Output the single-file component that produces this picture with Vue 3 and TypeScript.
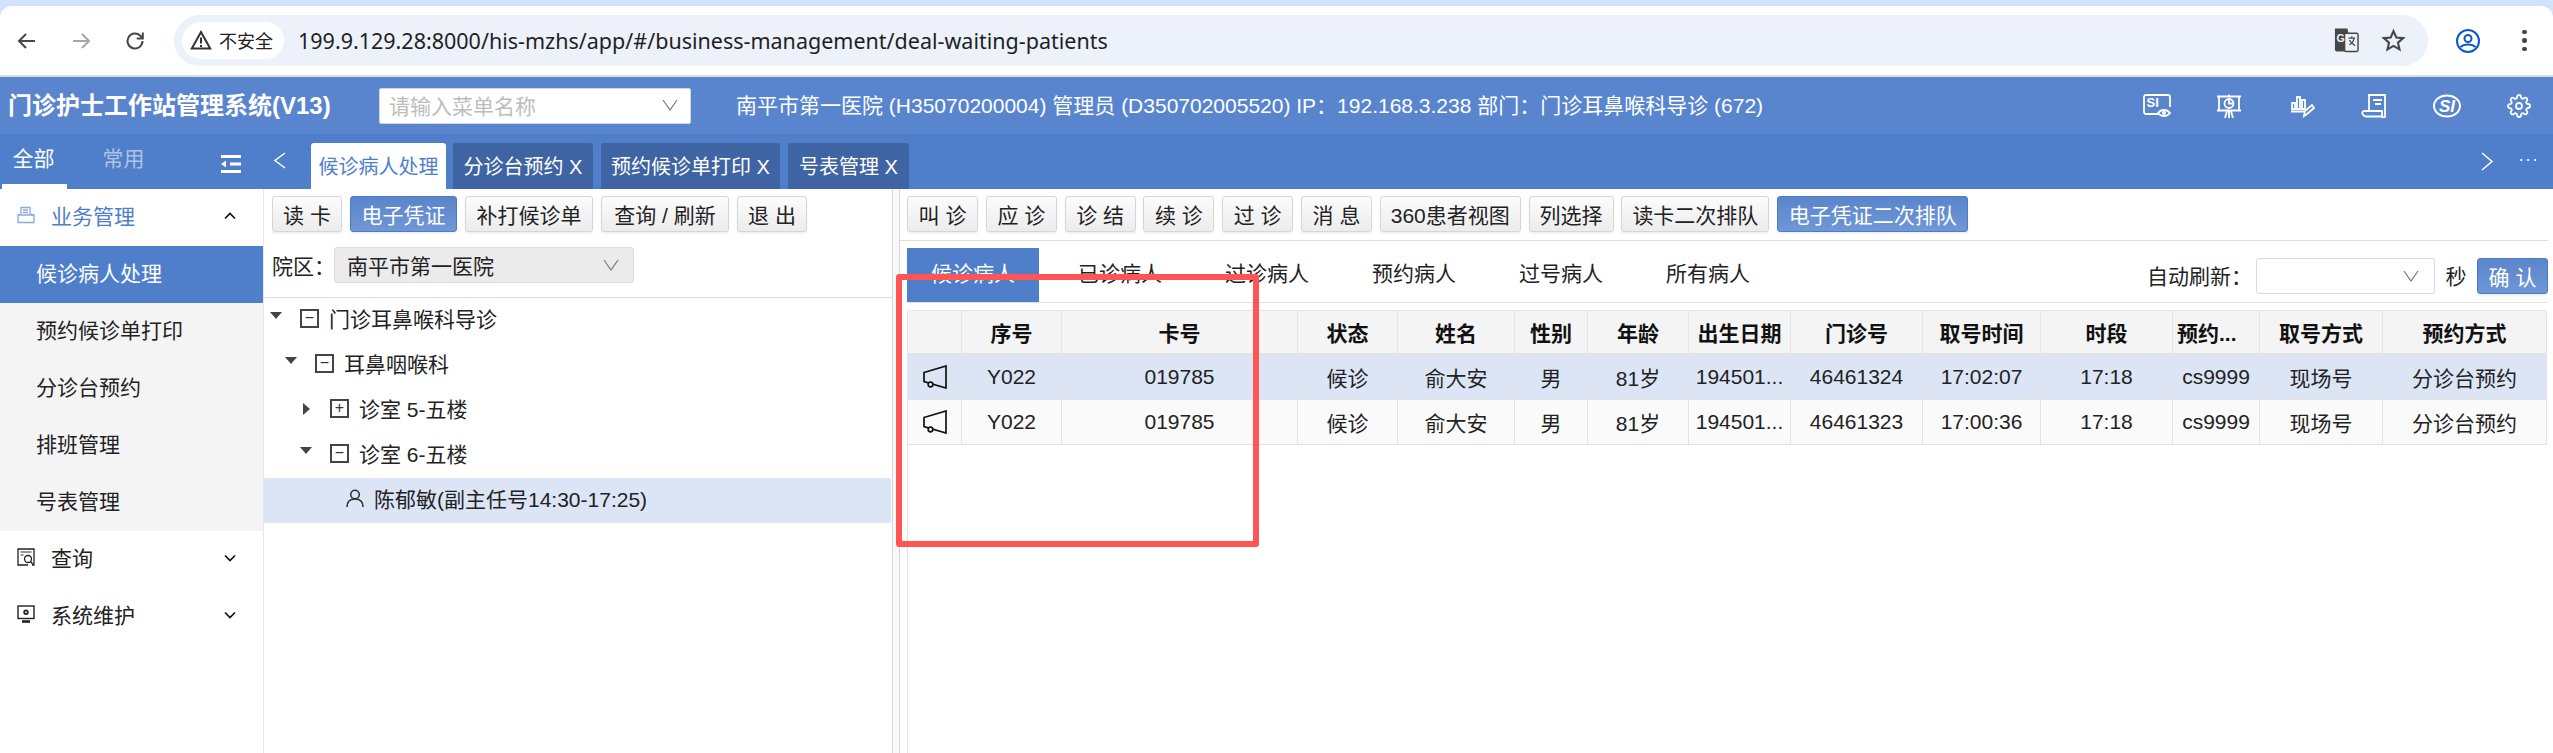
<script setup lang="ts">
const leftButtons = [
  { label: '读 卡', w: 70 },
  { label: '电子凭证', w: 107, primary: true },
  { label: '补打候诊单', w: 128 },
  { label: '查询 / 刷新', w: 128 },
  { label: '退 出', w: 70 },
]
const rightButtons = [
  { label: '叫 诊', w: 71 },
  { label: '应 诊', w: 71 },
  { label: '诊 结', w: 71 },
  { label: '续 诊', w: 71 },
  { label: '过 诊', w: 71 },
  { label: '消 息', w: 71 },
  { label: '360患者视图', w: 141 },
  { label: '列选择', w: 85 },
  { label: '读卡二次排队', w: 148 },
  { label: '电子凭证二次排队', w: 191, primary: true },
]
const subMenu = ['候诊病人处理', '预约候诊单打印', '分诊台预约', '排班管理', '号表管理']
const tree = [
  { label: '门诊耳鼻喉科导诊', level: 0, state: 'open' },
  { label: '耳鼻咽喉科', level: 1, state: 'open' },
  { label: '诊室 5-五楼', level: 2, state: 'closed' },
  { label: '诊室 6-五楼', level: 2, state: 'open' },
  { label: '陈郁敏(副主任号14:30-17:25)', level: 3, state: 'leaf' },
]
const patientTabs = ['候诊病人', '已诊病人', '过诊病人', '预约病人', '过号病人', '所有病人']
const headers = ['', '序号', '卡号', '状态', '姓名', '性别', '年龄', '出生日期', '门诊号', '取号时间', '时段', '预约...', '取号方式', '预约方式']
const rows = [
  ['Y022', '019785', '候诊', '俞大安', '男', '81岁', '194501...', '46461324', '17:02:07', '17:18', 'cs9999', '现场号', '分诊台预约'],
  ['Y022', '019785', '候诊', '俞大安', '男', '81岁', '194501...', '46461323', '17:00:36', '17:18', 'cs9999', '现场号', '分诊台预约'],
]
</script>

<template>
  <div class="page">
    <div class="browser">
      <div class="strip"></div>
      <div class="toolbar">
        <svg class="nav" viewBox="0 0 24 24" fill="none" stroke="#474747" stroke-width="2"><path d="M20 12H4.500M11 5l-7 7 7 7" /></svg>
        <svg class="nav" viewBox="0 0 24 24" fill="none" stroke="#a8a8a8" stroke-width="2"><path d="M4 12h15.500M13 5l7 7-7 7" /></svg>
        <svg class="nav" viewBox="0 0 24 24" fill="none" stroke="#474747" stroke-width="2"><path d="M19.500 12a7.500 7.500 0 1 1-2.400-5.500L19.500 9" /><path d="M19.800 3.500V9.500H13.800" /></svg>
        <div class="omnibox">
          <div class="chip">
            <svg class="warn" viewBox="0 0 22 20" fill="none" stroke="#333" stroke-width="2"><path d="M11 2L1.800 18.500h18.400z" /><path d="M11 7.500v6M11 15v2" /></svg>
            <span>不安全</span>
          </div>
          <span class="url">199.9.129.28:8000/his-mzhs/app/#/business-management/deal-waiting-patients</span>
          <svg class="translate" viewBox="0 0 26 26">
            <path d="M1 1h13l5 24H3a2 2 0 0 1-2-2z" fill="#474747" />
            <rect x="11" y="6" width="14" height="19" rx="1.500" fill="#ecf1fa" stroke="#474747" stroke-width="1.500" />
            <text x="2.500" y="15" class="g-letter">G</text>
            <path d="M15 11h7M18.500 9v2M21 11c-1 4-3 6-5 7M16 13c1 2 3 4 6 6" fill="none" stroke="#474747" stroke-width="1.300" />
          </svg>
          <svg class="star" viewBox="0 0 24 24" fill="none" stroke="#474747" stroke-width="2"><path d="M12 3l2.700 6.100 6.600.6-5 4.400 1.500 6.500L12 17.200l-5.800 3.400 1.500-6.500-5-4.400 6.600-.6z" /></svg>
        </div>
        <svg class="profile" viewBox="0 0 24 24" fill="none" stroke="#0b57d0" stroke-width="2"><circle cx="12" cy="12" r="11" /><circle cx="12" cy="9.500" r="3.500" /><path d="M4.500 18c2-2 4.500-2.600 7.500-2.600s5.500.6 7.500 2.600" /></svg>
        <div class="dots"><i></i><i></i><i></i></div>
      </div>
    </div>

    <header class="app-header">
      <h1 class="title">门诊护士工作站管理系统(V13)</h1>
      <div class="menu-search">
        <span>请输入菜单名称</span>
        <svg class="chev" viewBox="0 0 16 12" fill="none" stroke="#777" stroke-width="1.200"><path d="M1 1l7 10 7-10" /></svg>
      </div>
      <div class="info">南平市第一医院 (H35070200004) 管理员 (D350702005520) IP：192.168.3.238 部门：门诊耳鼻喉科导诊 (672)</div>
      <div class="head-icons">
        <svg viewBox="0 0 28 24" fill="none" stroke="#fff" stroke-width="1.800"><path d="M19 20H3a2 2 0 0 1-2-2V3a2 2 0 0 1 2-2h22a2 2 0 0 1 2 2v10" /><text x="3.500" y="13" class="si-mini">SI</text><path d="M15 19c3-4 9-4 12 0-3 4-9 4-12 0z" fill="#5985cf" /><circle cx="21" cy="19" r="2" fill="#fff" stroke="none" /></svg>
        <svg viewBox="0 0 24 24" fill="none" stroke="#fff" stroke-width="1.800"><path d="M0 2.500h24M2 2.500v14M22 2.500v14M0 16.500h24M12 .5v2M10 17l-2 7M14 17l2 7M12 17v7" /><circle cx="12" cy="9.500" r="4.500" /><path d="M12 5v4.500h4.500" /></svg>
        <svg viewBox="0 0 24 24" fill="none" stroke="#fff" stroke-width="1.800"><path d="M2 9v6h3V9zM7 3v12h3V3zM12 6v9h3V6zM1 17.500h13" /><path d="M14 22l1-5 7-6 2 3-7 6z" /></svg>
        <svg viewBox="0 0 24 24" fill="none" stroke="#fff" stroke-width="1.800"><path d="M7 16V1h16v21.500a1.500 1.500 0 0 1-3 0V17H2a2 2 0 0 0-1 3.500c.5 1 1.500 2 3 2h17.500" /><path d="M11 6h9M13 10h6" /></svg>
        <svg viewBox="0 0 28 24" fill="none" stroke="#fff" stroke-width="2"><ellipse cx="14" cy="12" rx="13" ry="10.500" /><text x="6" y="18" class="si-big">SI</text></svg>
        <svg viewBox="0 0 24 24" fill="none" stroke="#fff" stroke-width="1.800"><path d="M12 15a3 3 0 1 0 0-6 3 3 0 0 0 0 6z" /><path d="M19.400 15a1.650 1.650 0 0 0 .33 1.820l.06.06a2 2 0 0 1 0 2.830 2 2 0 0 1-2.830 0l-.06-.06a1.650 1.650 0 0 0-1.820-.33 1.650 1.650 0 0 0-1 1.510V21a2 2 0 0 1-2 2 2 2 0 0 1-2-2v-.09A1.650 1.650 0 0 0 9 19.400a1.650 1.650 0 0 0-1.820.33l-.06.06a2 2 0 0 1-2.830 0 2 2 0 0 1 0-2.830l.06-.06a1.650 1.650 0 0 0 .33-1.820 1.650 1.650 0 0 0-1.510-1H3a2 2 0 0 1-2-2 2 2 0 0 1 2-2h.09A1.650 1.650 0 0 0 4.600 9a1.650 1.650 0 0 0-.33-1.820l-.06-.06a2 2 0 0 1 0-2.830 2 2 0 0 1 2.830 0l.06.06a1.650 1.650 0 0 0 1.820.33H9a1.650 1.650 0 0 0 1-1.510V3a2 2 0 0 1 2-2 2 2 0 0 1 2 2v.09a1.650 1.650 0 0 0 1 1.510 1.650 1.650 0 0 0 1.820-.33l.06-.06a2 2 0 0 1 2.830 0 2 2 0 0 1 0 2.830l-.06.06a1.650 1.650 0 0 0-.33 1.820V9a1.650 1.650 0 0 0 1.510 1H21a2 2 0 0 1 2 2 2 2 0 0 1-2 2h-.09a1.650 1.650 0 0 0-1.510 1z" /></svg>
      </div>
    </header>

    <div class="tabbar">
      <div class="side-tabs">
        <span class="side-tab on">全部</span>
        <span class="side-tab">常用</span>
        <svg class="collapse" viewBox="0 0 20 18" fill="#fff"><rect x="0" y="0" width="20" height="3" /><rect x="9" y="7.500" width="11" height="3" /><rect x="0" y="15" width="20" height="3" /><path d="M0 9l5-3.500v7z" /></svg>
      </div>
      <svg class="tab-prev" viewBox="0 0 14 20" fill="none" stroke="#fff" stroke-width="1.500"><path d="M12 2L2 9.500 12 17" /></svg>
      <div class="page-tab active">候诊病人处理</div>
      <div class="page-tab t1">分诊台预约 X</div>
      <div class="page-tab t2">预约候诊单打印 X</div>
      <div class="page-tab t3">号表管理 X</div>
      <svg class="tab-next" viewBox="0 0 14 20" fill="none" stroke="#fff" stroke-width="1.500"><path d="M2 2l10 8.500L2 19" /></svg>
      <span class="tab-more">···</span>
    </div>

    <div class="body">
      <aside class="sidebar">
        <div class="menu-row blue">
          <svg class="menu-icon" viewBox="0 0 18 18" fill="none" stroke="#8aa9dc" stroke-width="1.300"><path d="M4 8V1.500h9V8M6 4h5M6 6.500h5" /><path d="M1 9h16v7.500H1z" /><path d="M1 9l3-1M17 9l-4-1" /></svg>
          <span>业务管理</span>
          <svg class="caret" viewBox="0 0 12 8" fill="none" stroke="#111" stroke-width="1.700"><path d="M1 6.500L6 1.500l5 5" /></svg>
        </div>
        <div v-for="(item, i) in subMenu" :key="item" class="sub-row" :class="{ current: i === 0 }">{{ item }}</div>
        <div class="menu-row">
          <svg class="menu-icon" viewBox="0 0 18 18" fill="none" stroke="#222" stroke-width="1.300"><path d="M11 17H1V1h16v16h-2" /><path d="M3.500 4h11M3.500 7h3" stroke="#777" /><circle cx="11" cy="11" r="3.500" /><path d="M13.500 13.500l2.500 3" /></svg>
          <span>查询</span>
          <svg class="caret" viewBox="0 0 12 8" fill="none" stroke="#111" stroke-width="1.700"><path d="M1 1.500l5 5 5-5" /></svg>
        </div>
        <div class="menu-row">
          <svg class="menu-icon" viewBox="0 0 18 18" fill="none" stroke="#222" stroke-width="1.400"><rect x="1" y="1" width="16" height="12.500" /><path d="M5 16.500h8" stroke-width="2.600" /><circle cx="9" cy="7.200" r="1.800" stroke-width="1.800" /></svg>
          <span>系统维护</span>
          <svg class="caret" viewBox="0 0 12 8" fill="none" stroke="#111" stroke-width="1.700"><path d="M1 1.500l5 5 5-5" /></svg>
        </div>
      </aside>

      <section class="tree-panel">
        <div class="tree-top">
          <div class="btn-row">
            <button v-for="b in leftButtons" :key="b.label" class="btn" :class="{ primary: b.primary }" :style="{ width: b.w + 'px' }">{{ b.label }}</button>
          </div>
          <div class="campus">
            <span class="campus-label">院区：</span>
            <div class="campus-select">
              <span>南平市第一医院</span>
              <svg class="chev" viewBox="0 0 16 12" fill="none" stroke="#777" stroke-width="1.200"><path d="M1 1l7 10 7-10" /></svg>
            </div>
          </div>
        </div>
        <div class="tree">
          <div v-for="node in tree" :key="node.label" class="tree-row" :class="{ selected: node.state === 'leaf' }" :style="{ paddingLeft: 6 + node.level * 15 + 'px' }">
            <template v-if="node.state !== 'leaf'">
              <span class="arrow" :class="node.state"></span>
              <span class="box">{{ node.state === 'open' ? '−' : '+' }}</span>
            </template>
            <svg v-else class="person" viewBox="0 0 18 18" fill="none" stroke="#333" stroke-width="1.600"><circle cx="9" cy="5.500" r="4.300" /><path d="M1 18c0-5 3-8 8-8s8 3 8 8" /></svg>
            <span>{{ node.label }}</span>
          </div>
        </div>
      </section>

      <div class="splitter"></div>

      <section class="main">
        <div class="main-tools">
          <button v-for="b in rightButtons" :key="b.label" class="btn" :class="{ primary: b.primary }" :style="{ width: b.w + 'px' }">{{ b.label }}</button>
        </div>
        <div class="patient-tabs">
          <div v-for="(t, i) in patientTabs" :key="t" class="patient-tab" :class="{ on: i === 0 }">{{ t }}</div>
          <div class="refresh">
            <span class="refresh-label">自动刷新：</span>
            <div class="refresh-select">
              <svg class="chev" viewBox="0 0 16 12" fill="none" stroke="#777" stroke-width="1.200"><path d="M1 1l7 10 7-10" /></svg>
            </div>
            <span class="sec">秒</span>
            <button class="btn primary confirm">确 认</button>
          </div>
        </div>
        <div class="table-area">
          <div class="grid head">
            <div v-for="(h, i) in headers" :key="i" class="cell" :class="{ clipped: h.endsWith('...') }">{{ h }}</div>
          </div>
          <div v-for="(row, r) in rows" :key="r" class="grid data" :class="r === 0 ? 'first' : 'second'">
            <div class="cell">
              <svg class="horn" viewBox="0 0 24 24" fill="none" stroke="#111" stroke-width="1.700"><path d="M1 7.500L23 1v22L1 16.500z" /><circle cx="7.500" cy="19.500" r="2.300" fill="#fff" /></svg>
            </div>
            <div v-for="(c, i) in row" :key="i" class="cell">{{ c }}</div>
          </div>
        </div>
      </section>
    </div>

    <div class="annotation"></div>
  </div>
</template>

<style>
html, body { margin: 0; background: #fff; overflow: hidden; }
</style>

<style scoped>
.page {
  position: relative;
  width: 2553px;
  height: 753px;
  display: flex;
  flex-direction: column;
  overflow: hidden;
  font-family: "Liberation Sans", "Noto Sans CJK SC", sans-serif;
  font-size: 21px;
  color: #222;
  background: #fff;
}
.browser { height: 77px; flex: none; background: #d3e3fd; display: flex; flex-direction: column; }
.strip { height: 6px; flex: none; }
.toolbar {
  flex: 1;
  background: #fff;
  border-radius: 12px 12px 0 0;
  border-bottom: 2px solid #dcdcdc;
  display: flex;
  align-items: center;
  padding-left: 15px;
  box-sizing: border-box;
}
.nav { width: 24px; height: 24px; margin-right: 30px; flex: none; }
.omnibox {
  width: 2254px;
  height: 51px;
  margin-left: -3px;
  margin-top: -1px;
  background: #ecf1fa;
  border-radius: 26px;
  display: flex;
  align-items: center;
  padding-left: 8px;
  box-sizing: border-box;
  flex: none;
}
.chip {
  width: 102px;
  height: 37px;
  background: #fff;
  border-radius: 19px;
  display: flex;
  align-items: center;
  padding-left: 8px;
  box-sizing: border-box;
  font-size: 18px;
  color: #222;
  flex: none;
}
.warn { width: 22px; height: 20px; margin-right: 7px; flex: none; }
.url {
  margin-left: 14px;
  font-family: "Noto Sans", sans-serif;
  font-size: 21.500px;
  color: #1f1f1f;
  white-space: nowrap;
  flex: 1;
}
.translate { width: 25px; height: 26px; margin-right: 22px; flex: none; }
.g-letter { font-family: "Liberation Sans", sans-serif; font-weight: 700; font-size: 11px; fill: #ecf1fa; }
.star { width: 25px; height: 25px; margin-right: 22px; flex: none; }
.profile { width: 24px; height: 24px; margin-left: 28px; flex: none; }
.dots { margin-left: 42px; display: flex; flex-direction: column; gap: 4px; }
.dots i { width: 4.500px; height: 4.500px; border-radius: 50%; background: #444; display: block; }

.app-header {
  height: 57px;
  flex: none;
  background: #5985cf;
  color: #fff;
  display: flex;
  align-items: center;
  padding: 0 20px 0 8px;
  box-sizing: border-box;
}
.title { margin: 0 0 4px; font-size: 24px; font-weight: 700; width: 371px; white-space: nowrap; flex: none; }
.menu-search {
  width: 312px;
  height: 36px;
  background: #fff;
  border: 1px solid #d5d5d5;
  border-radius: 2px;
  box-sizing: border-box;
  display: flex;
  align-items: center;
  justify-content: space-between;
  padding: 0 12px 2px 9px;
  color: #bdbdbd;
  flex: none;
}
.chev { width: 16px; height: 12px; flex: none; }
.info { margin: 0 0 4px 45px; white-space: nowrap; flex: 1; }
.head-icons { display: flex; align-items: center; gap: 44.500px; flex: none; }
.head-icons svg { width: 28px; height: 24px; flex: none; }

.tabbar {
  height: 55px;
  flex: none;
  background: #4f7eca;
  display: flex;
  align-items: flex-end;
  position: relative;
}
.side-tabs { width: 263px; height: 55px; display: flex; position: relative; flex: none; }
.side-tab { width: 65px; margin-right: 28px; text-align: center; line-height: 50px; color: rgba(255, 255, 255, 0.55); font-size: 21px; box-sizing: border-box; }
.side-tab.on { color: #fff; border-bottom: 5px solid #fff; margin-left: 2px; margin-right: 24px; padding-right: 2px; }
.collapse { position: absolute; left: 221px; top: 21px; width: 20px; height: 18px; }
.tab-prev { width: 14px; height: 20px; margin: 0 24px 18px 10px; flex: none; }
.page-tab {
  height: 46px;
  line-height: 48px;
  font-size: 20px;
  text-align: center;
  color: #fff;
  background: #3f64a3;
  border-radius: 3px 3px 0 0;
  margin-right: 8px;
  white-space: nowrap;
  flex: none;
}
.page-tab.active { width: 135px; margin-right: 7px; background: #fff; color: #4f7eca; }
.t1 { width: 140px; }
.t2 { width: 179px; }
.t3 { width: 121px; }
.tab-next { width: 14px; height: 20px; margin: 0 0 18px auto; flex: none; }
.tab-more { color: #fff; font-size: 18px; line-height: 20px; margin: 0 14px 20px 24px; letter-spacing: 1px; }

.body { flex: 1; display: flex; min-height: 0; }
.sidebar { width: 264px; flex: none; border-right: 1px solid #e8e8e8; box-sizing: border-box; }
.menu-row { height: 57px; display: flex; align-items: center; padding: 0 0 5px 17px; box-sizing: border-box; position: relative; color: #222; }
.menu-row.blue { color: #4f7eca; }
.menu-icon { width: 18px; height: 18px; margin-right: 16px; flex: none; }
.caret { position: absolute; left: 224px; top: 23px; width: 12px; height: 8px; }
.sub-row { height: 57px; line-height: 55px; padding-left: 36px; background: #f4f4f4; }
.sub-row.current { background: #4f7eca; color: #fff; }

.tree-panel { width: 628px; flex: none; display: flex; flex-direction: column; }
.tree-top { height: 109px; border-bottom: 1px solid #dedede; padding: 7px 0 0 8px; box-sizing: border-box; flex: none; }
.btn-row { display: flex; gap: 8px; }
.btn {
  height: 36px;
  padding: 0;
  font: inherit;
  color: #222;
  white-space: nowrap;
  background: linear-gradient(#fcfcfc, #ececec);
  border: 1px solid #d6d6d6;
  border-radius: 3px;
  box-shadow: 0 2px 2px rgba(0, 0, 0, 0.06);
  box-sizing: border-box;
  flex: none;
}
.btn.primary { background: linear-gradient(#5a85cc, #7097d6); border-color: #4c7cc9; color: #fff; }
.campus { display: flex; align-items: center; margin-top: 15px; }
.campus-label { width: 62px; flex: none; white-space: nowrap; }
.campus-select {
  width: 300px;
  height: 36px;
  background: #ebebeb;
  border: 1px solid #ddd;
  border-radius: 3px;
  box-sizing: border-box;
  display: flex;
  align-items: center;
  justify-content: space-between;
  padding: 0 14px 0 12px;
}
.tree { flex: 1; }
.tree-row { height: 45px; display: flex; align-items: center; width: 627px; box-sizing: border-box; white-space: nowrap; padding-bottom: 5px; }
.tree-row.selected { background: #dce5f5; padding-left: 82px !important; }
.arrow { width: 12px; height: 12px; margin-right: 18px; flex: none; position: relative; }
.arrow::before { content: ""; position: absolute; }
.arrow.open::before { left: 0; top: 0; border-left: 6px solid transparent; border-right: 6px solid transparent; border-top: 7px solid #444; }
.arrow.closed::before { left: 3px; top: 1px; border-top: 6px solid transparent; border-bottom: 6px solid transparent; border-left: 7px solid #444; }
.box {
  width: 19px;
  height: 19px;
  border: 2px solid #444;
  box-sizing: border-box;
  display: flex;
  align-items: center;
  justify-content: center;
  font-size: 16px;
  line-height: 1;
  color: #333;
  margin-right: 10px;
  flex: none;
}
.person { width: 18px; height: 18px; margin-right: 10px; flex: none; }

.splitter { width: 8px; flex: none; background: #f8f8f8; border-left: 1px solid #d5d5d5; border-right: 1px solid #d5d5d5; box-sizing: border-box; }
.main { flex: 1; min-width: 0; display: flex; flex-direction: column; padding-right: 5px; }
.main-tools { height: 52px; flex: none; display: flex; gap: 7.800px; padding: 7px 0 0 7px; box-sizing: border-box; border-bottom: 1.500px solid #dedede; }
.patient-tabs { height: 62px; flex: none; margin-left: 7px; padding-top: 7px; box-sizing: border-box; display: flex; gap: 15px; border-bottom: 1.500px solid #e3e3e3; }
.patient-tab { width: 132px; height: 54px; line-height: 51px; text-align: center; flex: none; }
.patient-tab.on { background: #4f7eca; color: #fff; }
.refresh { margin-left: auto; display: flex; align-items: center; height: 36px; margin-top: 10px; }
.refresh-label { width: 109px; flex: none; white-space: nowrap; padding-bottom: 3px; }
.refresh-select {
  width: 179px;
  height: 36px;
  border: 1px solid #d9d9d9;
  border-radius: 3px;
  box-sizing: border-box;
  display: flex;
  align-items: center;
  justify-content: flex-end;
  padding-right: 15px;
}
.sec { width: 42px; text-align: center; padding-bottom: 3px; }
.confirm { width: 71px; }
.table-area { flex: 1; margin-left: 7px; margin-top: 7px; border-left: 1px solid #e3e3e3; min-height: 0; }
.grid {
  display: grid;
  grid-template-columns: 54px 100px 236px 100px 117px 73px 101px 102px 132px 118px 132px 87px 123px 163px;
  width: 1639px;
  box-sizing: border-box;
  border-right: 1px solid #e3e3e3;
  border-bottom: 1px solid #e3e3e3;
}
.head { height: 44px; background: #f4f4f4; font-weight: 700; border-top: 1px solid #e3e3e3; border-radius: 3px 3px 0 0; }
.data { height: 45px; }
.data.first { background: #dce5f5; height: 46px; }
.data.second { background: #fafafa; }
.cell {
  display: flex;
  align-items: center;
  justify-content: center;
  border-right: 1px solid #e3e3e3;
  white-space: nowrap;
  overflow: hidden;
  color: #222;
}
.head .cell { color: #111; }
.head .cell.clipped { justify-content: flex-start; padding-left: 4px; }
.cell:last-child { border-right: 0; }
.horn { width: 24px; height: 24px; }
.si-mini { font-family: "Liberation Sans", sans-serif; font-weight: 700; font-size: 13px; fill: #fff; stroke: none; }
.si-big { font-family: "Liberation Sans", sans-serif; font-weight: 700; font-style: italic; font-size: 17px; fill: #fff; stroke: none; }

.annotation {
  position: absolute;
  left: 896px;
  top: 274px;
  width: 363px;
  height: 273px;
  border: 6px solid #ff5555;
  border-radius: 3px;
  box-sizing: border-box;
  pointer-events: none;
}
</style>
